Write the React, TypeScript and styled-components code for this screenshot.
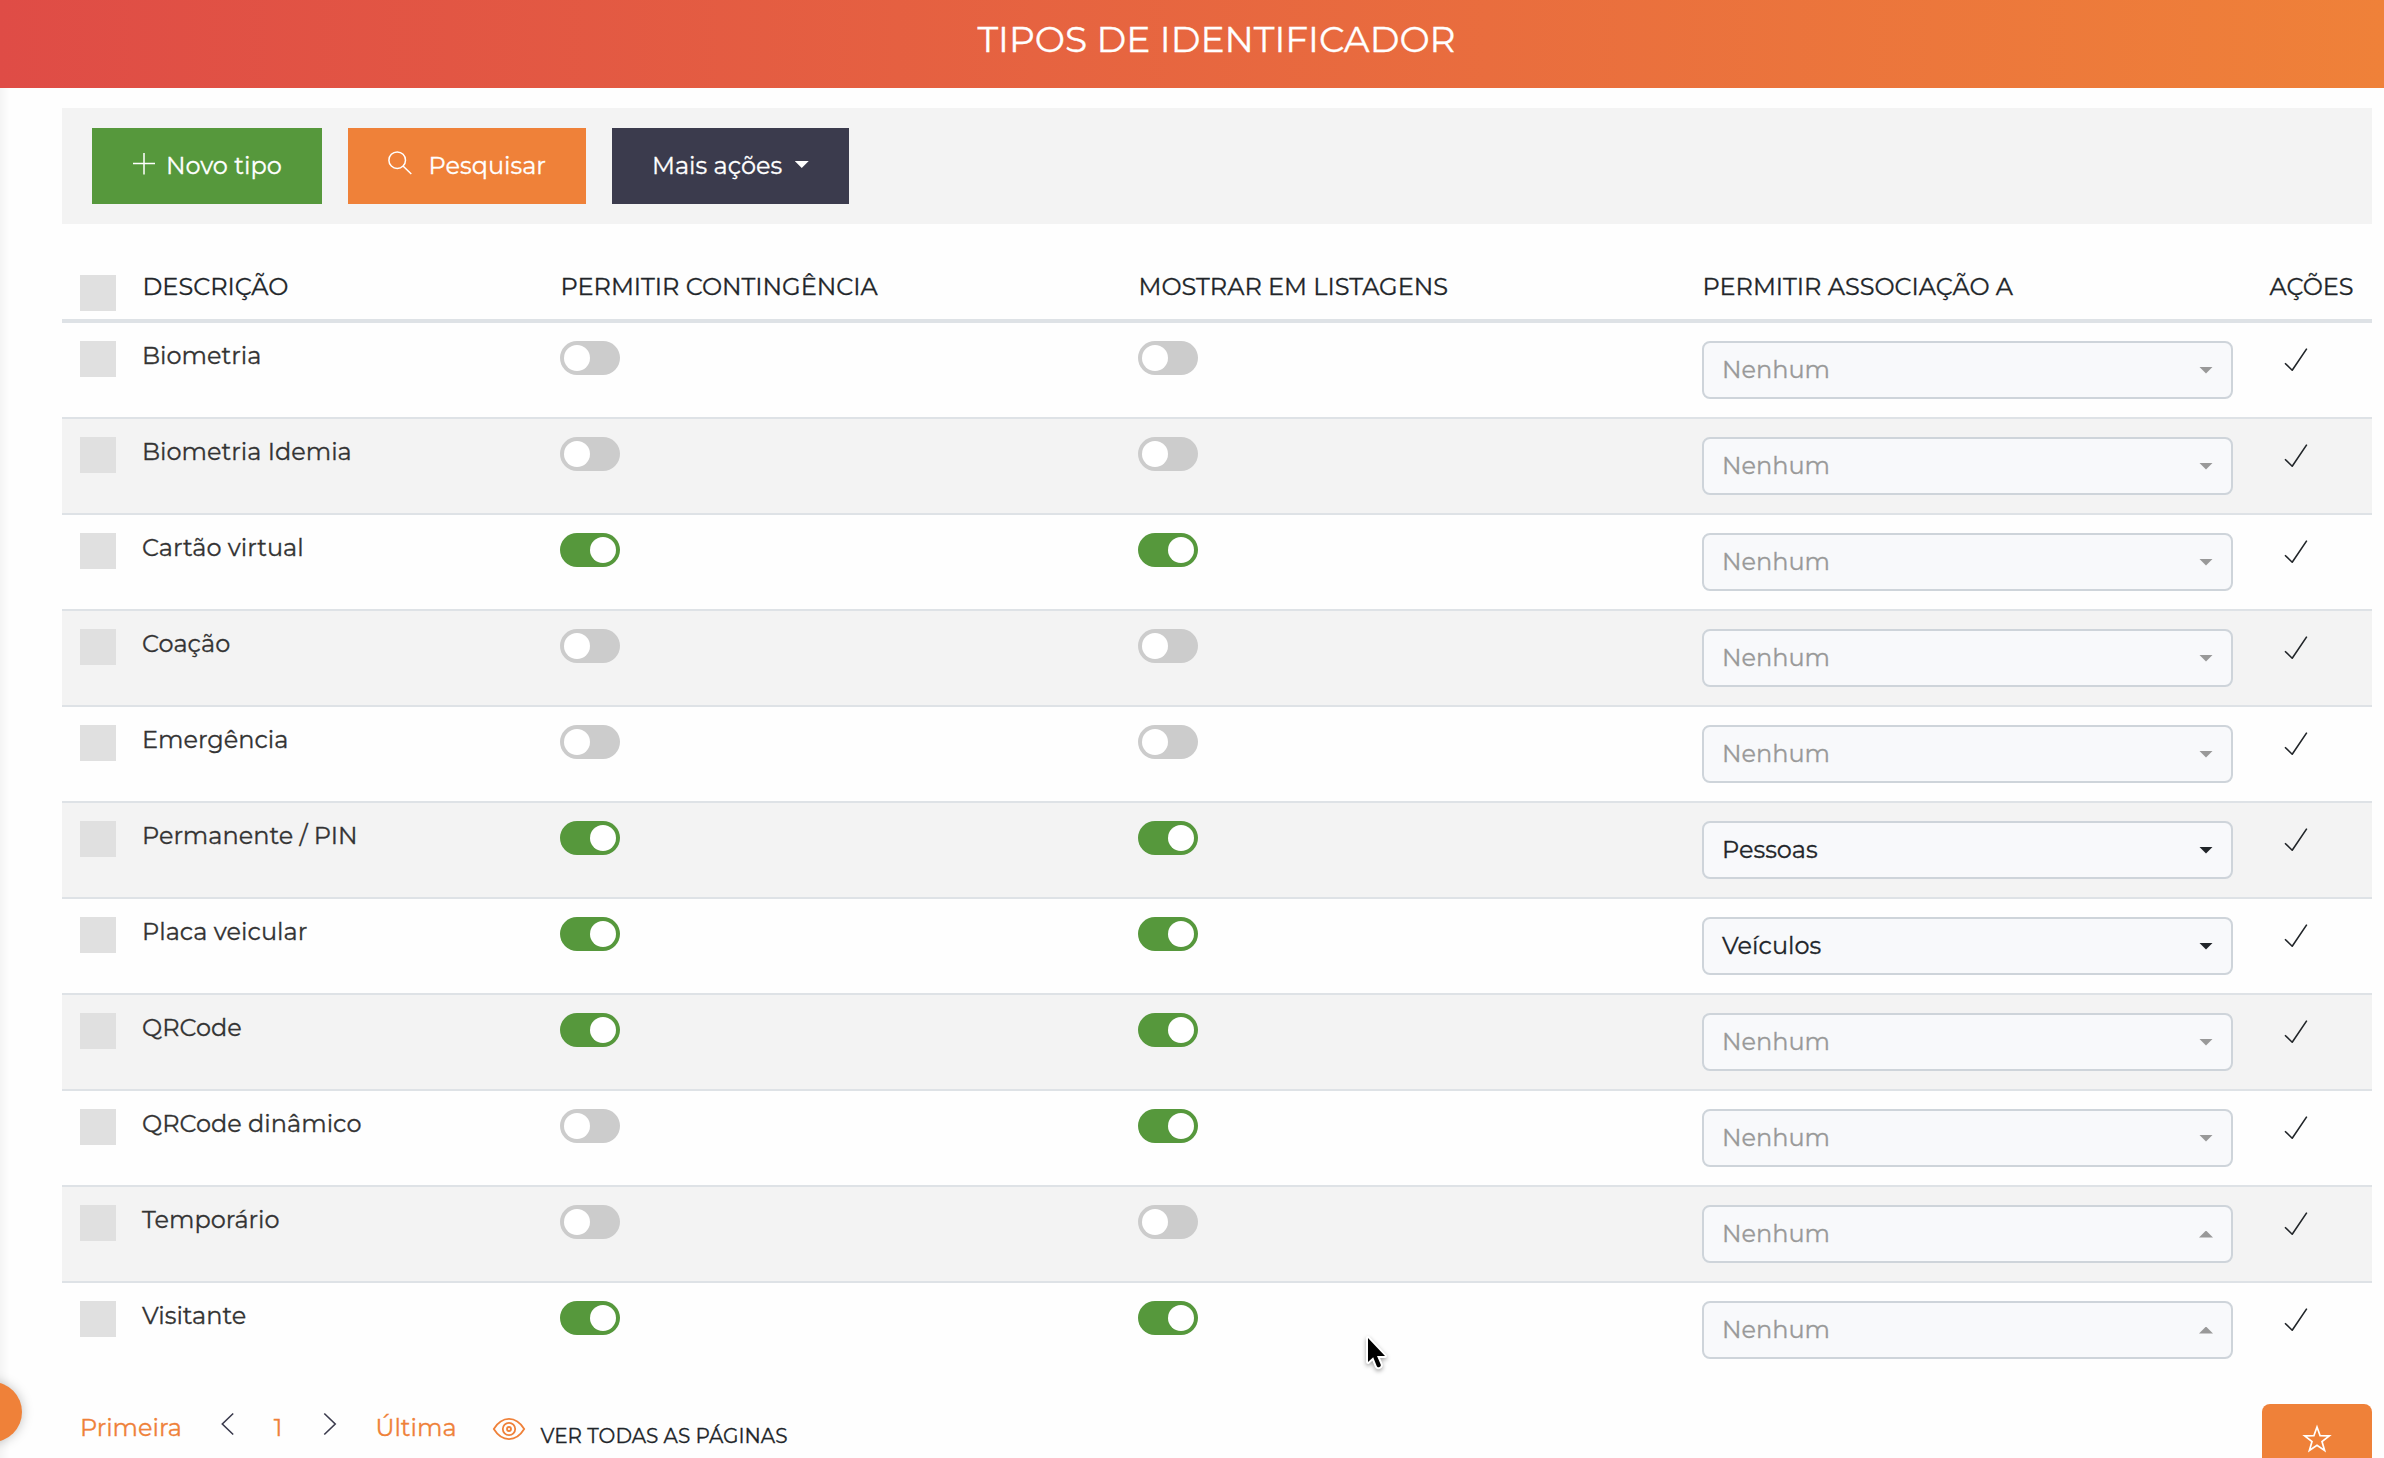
import React from "react";
import styled, { createGlobalStyle } from "styled-components";

const GlobalStyle = createGlobalStyle`
  * { box-sizing: border-box; }
  body {
    margin: 0;
    background: #fff;
    font-family: Montserrat, Inter, "Open Sans", sans-serif;
    font-size: 24px;
    line-height: 36px;
    color: #212529;
    -webkit-text-stroke: 0.3px currentColor;
  }
`;

const Page = styled.div`
  position: relative;
  height: 1458px;
  overflow: hidden;
  background: #fefefe;
`;

const Header = styled.header`
  height: 88px;
  padding: 19px 0 0 49px;
  background: linear-gradient(90deg, #df4c46 0%, #ef8139 100%);
`;

const Title = styled.h1`
  margin: 0;
  font-size: 36px;
  line-height: 40px;
  font-weight: 400;
  text-align: center;
  color: #fff;
`;

const Content = styled.main`
  height: 1370px;
  padding: 20px 12px 0 62px;
  background: linear-gradient(90deg, rgba(0, 0, 0, 0.04), rgba(0, 0, 0, 0) 10px);
`;

const Toolbar = styled.div`
  display: flex;
  gap: 26px;
  height: 116px;
  padding: 20px 30px;
  background: #f3f3f3;
`;

const Button = styled.button<{ $bg: string; $width: number; $gap: number }>`
  display: flex;
  align-items: flex-start;
  gap: ${(p) => p.$gap}px;
  width: ${(p) => p.$width}px;
  height: 76px;
  padding: 20px 0 0 40px;
  border: 0;
  background: ${(p) => p.$bg};
  color: #fff;
  font: inherit;
  white-space: nowrap;
`;

const PlusIcon = styled.svg`
  width: 22px;
  height: 22px;
  margin: 5px 0 0 1px;
  flex: none;
`;

const SearchIcon = styled.svg`
  width: 24px;
  height: 24px;
  margin-top: 3px;
  flex: none;
`;

const Caret = styled.span<{ $color: string; $up?: boolean }>`
  flex: none;
  width: 14px;
  height: 7px;
  background: ${(p) => p.$color};
  clip-path: ${(p) =>
    p.$up ? "polygon(50% 0, 100% 100%, 0 100%)" : "polygon(0 0, 100% 0, 50% 100%)"};
`;

const MenuCaret = styled(Caret)`
  margin-top: 13px;
`;

const Grid = styled.div`
  display: grid;
  grid-template-columns: 80px 418px 578px 564px 567px 1fr;
`;

const HeadRow = styled(Grid)`
  height: 99px;
  padding-top: 45px;
  border-bottom: 4px solid #dee2e6;
  text-transform: uppercase;
  white-space: nowrap;
`;

const HeadCell = styled.span`
  padding-left: 0.5px;
`;

const Row = styled(Grid)`
  height: 96px;
  border-top: 2px solid #dee2e6;
  color: #333;

  &:nth-child(even) {
    background: #f3f3f3;
  }
  &:first-child {
    height: 94px;
    border-top: 0;
  }
`;

const Checkbox = styled.span<{ $top: number }>`
  width: 36px;
  height: 36px;
  margin: ${(p) => p.$top}px 0 0 18px;
  background: #e0e0e0;
`;

const Name = styled.span`
  padding-top: 15px;
`;

const Switch = styled.span<{ $on: boolean }>`
  display: flex;
  justify-content: ${(p) => (p.$on ? "flex-end" : "flex-start")};
  width: 60px;
  height: 34px;
  margin-top: 18px;
  padding: 4px;
  border-radius: 17px;
  background: ${(p) => (p.$on ? "#56983c" : "#ccc")};
`;

const Knob = styled.span`
  width: 26px;
  height: 26px;
  border-radius: 50%;
  background: #fff;
`;

const Select = styled.div<{ $muted: boolean }>`
  display: flex;
  align-items: center;
  justify-content: space-between;
  width: 531px;
  height: 58px;
  margin-top: 18px;
  padding: 0 18px;
  border: 2px solid #ced4da;
  border-radius: 8px;
  background: #f8f9fb;
  color: ${(p) => (p.$muted ? "#999" : "#212529")};
`;

const CheckIcon = styled.svg`
  width: 24px;
  height: 24px;
  margin: 25px 0 0 15px;
`;

const Pager = styled.nav`
  display: flex;
  height: 60px;
  margin-top: 32px;
  padding-left: 18px;
`;

const PageLink = styled.a<{ $left?: number }>`
  margin-left: ${(p) => p.$left ?? 0}px;
  padding-top: 1px;
  color: #ef8139;
`;

const Chevron = styled.svg<{ $left: number }>`
  width: 14px;
  height: 24px;
  margin: 3px 0 0 ${(p) => p.$left}px;
`;

const EyeIcon = styled.svg`
  width: 34px;
  height: 24px;
  margin: 8px 0 0 35px;
`;

const ShowAll = styled.span`
  margin: 9px 0 0 15px;
  font-size: 20px;
  text-transform: uppercase;
`;

const MenuBubble = styled.div`
  position: absolute;
  left: -38px;
  top: 1382px;
  width: 60px;
  height: 60px;
  border-radius: 50%;
  background: #ef8139;
  box-shadow: 0 0 12px rgba(0, 0, 0, 0.25);
`;

const Favorite = styled.button`
  position: absolute;
  right: 12px;
  top: 1404px;
  display: flex;
  justify-content: center;
  width: 110px;
  height: 80px;
  padding: 20px 0 0;
  border: 0;
  border-radius: 8px;
  background: #ef8139;
`;

const Cursor = styled.svg`
  position: absolute;
  left: 1363px;
  top: 1333px;
  filter: drop-shadow(0 2px 2px rgba(0, 0, 0, 0.35));
`;

type Item = { name: string; contingency: boolean; listed: boolean; link?: string; up?: boolean };

const items: Item[] = [
  { name: "Biometria", contingency: false, listed: false },
  { name: "Biometria Idemia", contingency: false, listed: false },
  { name: "Cartão virtual", contingency: true, listed: true },
  { name: "Coação", contingency: false, listed: false },
  { name: "Emergência", contingency: false, listed: false },
  { name: "Permanente / PIN", contingency: true, listed: true, link: "Pessoas" },
  { name: "Placa veicular", contingency: true, listed: true, link: "Veículos" },
  { name: "QRCode", contingency: true, listed: true },
  { name: "QRCode dinâmico", contingency: false, listed: true },
  { name: "Temporário", contingency: false, listed: false, up: true },
  { name: "Visitante", contingency: true, listed: true, up: true },
];

function Toggle({ on }: { on: boolean }) {
  return (
    <Switch $on={on} role="switch" aria-checked={on}>
      <Knob />
    </Switch>
  );
}

export default function App() {
  return (
    <Page>
      <GlobalStyle />
      <Header>
        <Title>TIPOS DE IDENTIFICADOR</Title>
      </Header>
      <Content>
        <Toolbar>
          <Button $bg="#56983c" $width={230} $gap={11}>
            <PlusIcon viewBox="0 0 22 22" stroke="#fff" strokeWidth="1.5">
              <path d="M11 0v21.5M0 10.6h22" />
            </PlusIcon>
            Novo tipo
          </Button>
          <Button $bg="#ef8139" $width={238} $gap={16.5}>
            <SearchIcon viewBox="0 0 24 24" fill="none" stroke="#fff" strokeWidth="1.5">
              <circle cx="9.2" cy="9.2" r="8.3" />
              <path d="M15 15l8.3 8" />
            </SearchIcon>
            Pesquisar
          </Button>
          <Button $bg="#3b3b4d" $width={237} $gap={12.5}>
            Mais ações
            <MenuCaret $color="#fff" />
          </Button>
        </Toolbar>

        <HeadRow>
          <Checkbox $top={6} />
          <HeadCell>Descrição</HeadCell>
          <HeadCell>Permitir contingência</HeadCell>
          <HeadCell>Mostrar em listagens</HeadCell>
          <HeadCell>Permitir associação a</HeadCell>
          <HeadCell>Ações</HeadCell>
        </HeadRow>
        <div>
          {items.map((item) => (
            <Row key={item.name}>
              <Checkbox $top={18} />
              <Name>{item.name}</Name>
              <Toggle on={item.contingency} />
              <Toggle on={item.listed} />
              <Select $muted={!item.link}>
                {item.link ?? "Nenhum"}
                <Caret $color={item.link ? "#212529" : "#999"} $up={item.up} />
              </Select>
              <CheckIcon viewBox="0 0 24 24" fill="none" stroke="#212529" strokeWidth="1.6">
                <path d="M1 15.2l7.2 7L22.8.6" strokeLinejoin="round" />
              </CheckIcon>
            </Row>
          ))}
        </div>

        <Pager>
          <PageLink>Primeira</PageLink>
          <Chevron $left={39.5} viewBox="0 0 14 24" fill="none" stroke="#3b3b4d" strokeWidth="1.6">
            <path d="M12.2 1.5L1.3 12l10.9 10.5" />
          </Chevron>
          <PageLink $left={38.5}>1</PageLink>
          <Chevron $left={40.5} viewBox="0 0 14 24" fill="none" stroke="#3b3b4d" strokeWidth="1.6">
            <path d="M1.3 1.5L12.2 12 1.3 22.5" />
          </Chevron>
          <PageLink $left={38.5}>Última</PageLink>
          <EyeIcon viewBox="0 0 34 24" fill="none" stroke="#ef8139" strokeWidth="1.8">
            <path d="M1.8 12C6 5.2 11 1.9 17 1.9S28 5.2 32.2 12C28 18.8 23 22.1 17 22.1S6 18.8 1.8 12z" />
            <circle cx="17" cy="12" r="6.2" />
            <circle cx="17" cy="12" r="2" />
          </EyeIcon>
          <ShowAll>Ver todas as páginas</ShowAll>
        </Pager>
      </Content>

      <MenuBubble />
      <Favorite aria-label="Favoritar">
        <svg width="30" height="30" viewBox="0 0 30 30" fill="none" stroke="#fff" strokeWidth="1.7">
          <path d="M15 3l3.1 8.7 9.2.2-7.3 5.6 2.6 8.9L15 21.2l-7.6 5.2 2.6-8.9-7.3-5.6 9.2-.2z" />
        </svg>
      </Favorite>
      <Cursor width="32" height="44" viewBox="0 0 32 44">
        <path
          d="M5 5v24l5.2-4.7 3.5 8.6c.5 1.2 1.6 1.6 2.8 1.1s1.6-1.6 1.1-2.8l-3.6-8.2H22z"
          fill="#000"
          stroke="#fff"
          strokeWidth="4"
          strokeLinejoin="round"
          paintOrder="stroke"
        />
      </Cursor>
    </Page>
  );
}
